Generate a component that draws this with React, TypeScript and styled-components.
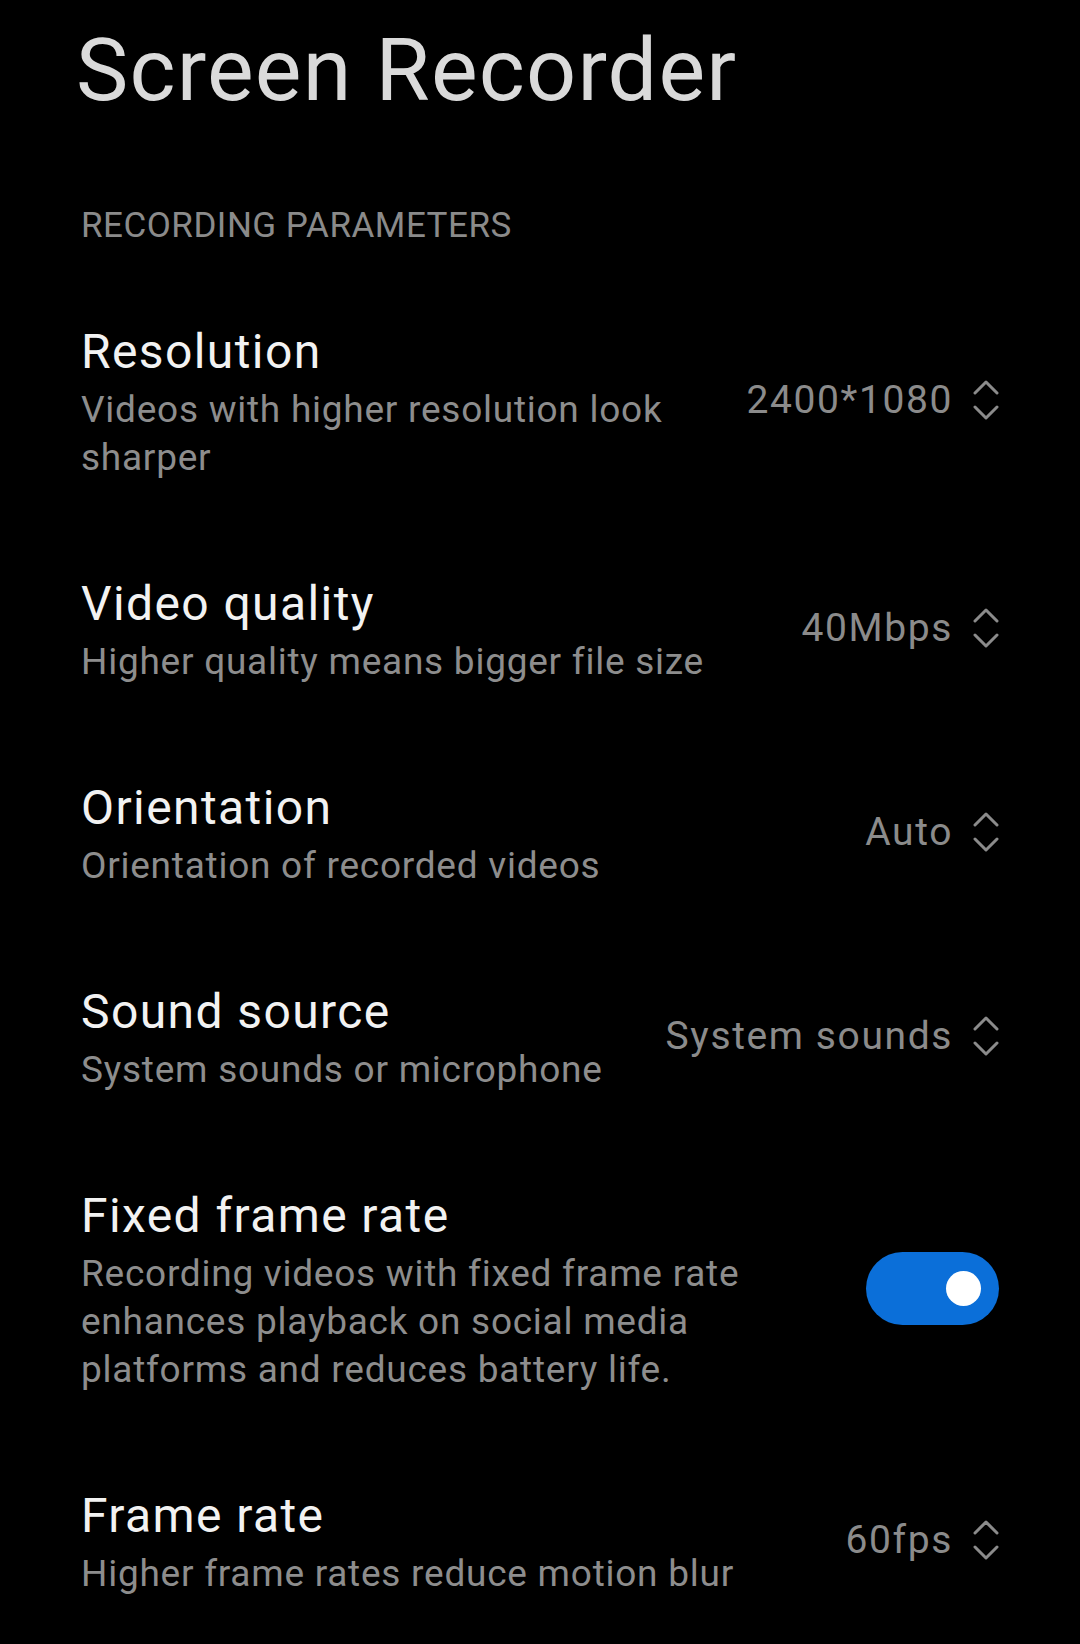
import React, {useState} from 'react'
import styled, {createGlobalStyle} from 'styled-components'

const GlobalStyle = createGlobalStyle`
  html, body {
    margin: 0;
    padding: 0;
    background: #000;
  }
  body {
    font-family: Roboto, "Noto Sans", sans-serif;
    -webkit-font-smoothing: antialiased;
  }
`

const Page = styled.div`
  width: 1080px;
  min-height: 1644px;
  background: #000;
  padding: 18px 81px 0;
  box-sizing: border-box;
`

const PageTitle = styled.h1`
  margin: 0 0 80px -5px;
  font-size: 88px;
  line-height: 104px;
  font-weight: 400;
  letter-spacing: 1.2px;
  color: #dadada;
`

const SectionHeader = styled.div`
  font-size: 35px;
  line-height: 48px;
  letter-spacing: 0.5px;
  color: #8a8a8a;
  margin-bottom: 24px;
`

const Row = styled.div`
  display: flex;
  align-items: center;
  gap: 48px;
  padding: 44px 0;
`

const TextColumn = styled.div`
  flex: 1;
  min-width: 0;
`

const RowTitle = styled.div`
  font-size: 48px;
  line-height: 68px;
  letter-spacing: 1.4px;
  color: #f2f2f2;
`

const RowSubtitle = styled.div`
  font-size: 37px;
  line-height: 48px;
  letter-spacing: 0.75px;
  color: #8d8d8d;
`

const ValuePicker = styled.div`
  display: flex;
  align-items: center;
  gap: 20px;
  flex-shrink: 0;
`

const ValueText = styled.span`
  font-size: 39px;
  letter-spacing: 1.6px;
  color: #8b8b8b;
  white-space: nowrap;
`

const Toggle = styled.button<{ $on: boolean }>`
  width: 133px;
  height: 73px;
  border-radius: 37px;
  border: none;
  padding: 0 18px;
  display: flex;
  align-items: center;
  justify-content: ${p => p.$on ? 'flex-end' : 'flex-start'};
  background: ${p => p.$on ? '#0b6fd9' : '#3a3a3a'};
  flex-shrink: 0;
  cursor: pointer;
`

const Knob = styled.span`
  width: 35px;
  height: 35px;
  border-radius: 50%;
  background: #fff;
`

const UpDownIcon = () =>
  <svg width="26" height="40" viewBox="0 0 26 40" fill="none" stroke="#8b8b8b"
       strokeWidth="3" strokeLinecap="round" strokeLinejoin="round">
    <polyline points="2,13 13,2 24,13" />
    <polyline points="2,27 13,38 24,27" />
  </svg>

type Setting = {
  title: string
  subtitle: string
  value?: string
}

const settings: Setting[] = [
  {title: 'Resolution', subtitle: 'Videos with higher resolution look sharper', value: '2400*1080'},
  {title: 'Video quality', subtitle: 'Higher quality means bigger file size', value: '40Mbps'},
  {title: 'Orientation', subtitle: 'Orientation of recorded videos', value: 'Auto'},
  {title: 'Sound source', subtitle: 'System sounds or microphone', value: 'System sounds'},
]

const SettingRow = (props: { title: string, subtitle: string, children: React.ReactNode }) =>
  <Row>
    <TextColumn>
      <RowTitle>{props.title}</RowTitle>
      <RowSubtitle>{props.subtitle}</RowSubtitle>
    </TextColumn>
    {props.children}
  </Row>

export default function App() {
  const [fixedRate, setFixedRate] = useState(true)

  return <>
    <GlobalStyle />
    <Page>
      <PageTitle>Screen Recorder</PageTitle>
      <SectionHeader>RECORDING PARAMETERS</SectionHeader>
      {settings.map(s =>
        <SettingRow key={s.title} title={s.title} subtitle={s.subtitle}>
          <ValuePicker>
            <ValueText>{s.value}</ValueText>
            <UpDownIcon />
          </ValuePicker>
        </SettingRow>
      )}
      <SettingRow title={'Fixed frame rate'}
                  subtitle={'Recording videos with fixed frame rate enhances playback on social media platforms and reduces battery life.'}>
        <Toggle $on={fixedRate} onClick={() => setFixedRate(!fixedRate)} aria-label="Fixed frame rate">
          <Knob />
        </Toggle>
      </SettingRow>
      <SettingRow title={'Frame rate'} subtitle={'Higher frame rates reduce motion blur'}>
        <ValuePicker>
          <ValueText>60fps</ValueText>
          <UpDownIcon />
        </ValuePicker>
      </SettingRow>
    </Page>
  </>
}
